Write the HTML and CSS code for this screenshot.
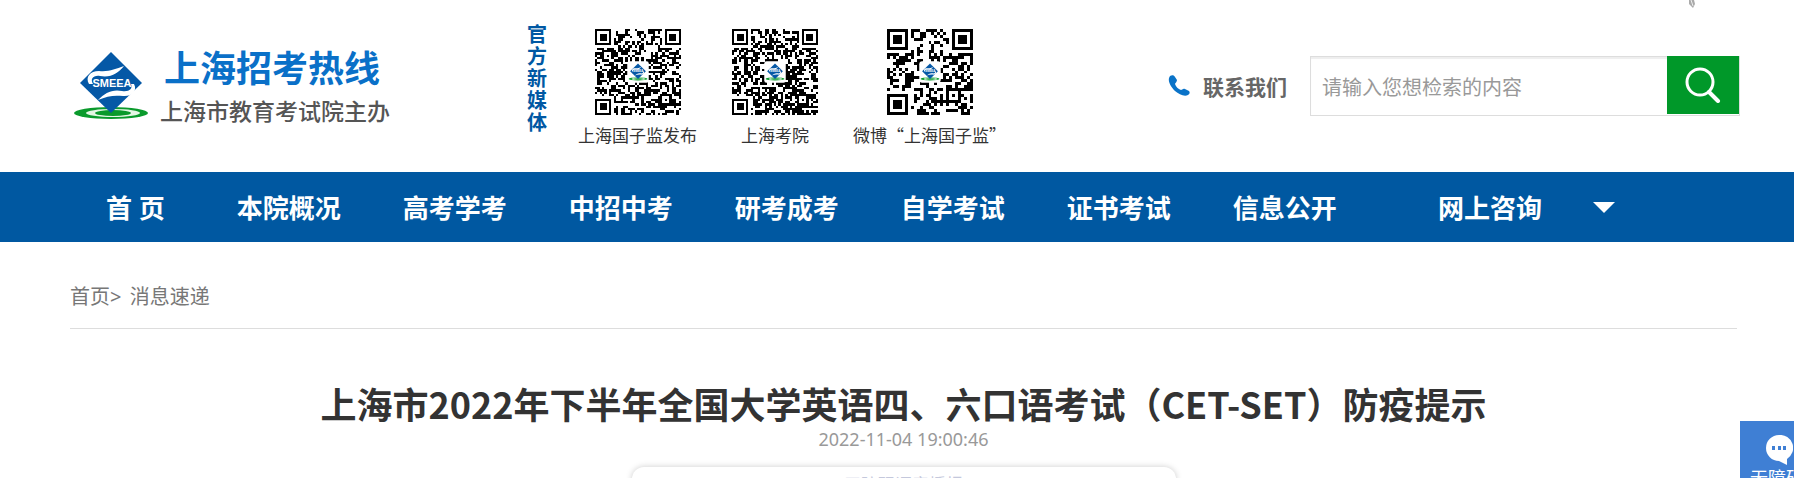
FILE: index.html
```
<!DOCTYPE html>
<html lang="zh-CN">
  <head>
    <meta charset="UTF-8" />
    <meta name="viewport" content="width=device-width, initial-scale=1.0" />
    <title>上海招考热线</title>
    <link rel="stylesheet" href="styles.css">
  </head>

  <body>
    <div class="header">
      <a class="logo" href="#">
        <svg class="logo-img" viewBox="0 0 76 68">
          <g id="emblem">
            <ellipse cx="38" cy="61" rx="37" ry="6" fill="#0a9a2c" />
            <ellipse cx="40" cy="61" rx="27" ry="4" fill="#e4f6e4" />
            <ellipse cx="40" cy="61" rx="18" ry="3" fill="#0a9a2c" />
            <path d="M38 0L69 31L38 61L7 31Z" fill="#0558a6" />
            <path d="M51 14C45 21 38 26 27 24C20 23 17 27 20 32L16 32C12 25 17 19 26 19C36 20 42 17 51 14Z" fill="#fff" />
            <path d="M25 48C32 41 39 37 49 39C56 40 60 37 58 32L61 32C65 39 58 45 50 44C41 43 34 44 25 48Z" fill="#fff" />
            <text x="39" y="35" text-anchor="middle" class="emblem-text">SMEEA</text>
          </g>
        </svg>
        <span class="logo-text">
          <strong>上海招考热线</strong>
          <em>上海市教育考试院主办</em>
        </span>
      </a>

      <div class="media">
        <h2>官方新媒体</h2>
        <ul>
          <li>
            <svg class="qr" data-size="37" data-seed="7"></svg>
            <p>上海国子监发布</p>
          </li>
          <li>
            <svg class="qr" data-size="37" data-seed="23"></svg>
            <p>上海考院</p>
          </li>
          <li>
            <svg class="qr" data-size="29" data-seed="41"></svg>
            <p>微博“上海国子监”</p>
          </li>
        </ul>
      </div>

      <a class="contact" href="#">
        <svg width="22" height="22" viewBox="0 0 22 22">
          <path d="M2 1C4 0 6 0 7 2L9 5C9 7 7 8 7 9C8 12 10 14 13 15C14 15 15 13 17 14L21 16C22 17 22 19 20 20C16 22 11 19 7 16C3 12 0 7 1 3Z" fill="#0a73c8" />
        </svg>
        <span>联系我们</span>
      </a>

      <form class="search">
        <input type="text" placeholder="请输入您想检索的内容" aria-label="检索" />
        <button type="button" aria-label="搜索">
          <svg width="36" height="36" viewBox="0 0 36 36" fill="none" stroke="#fff">
            <circle cx="15" cy="15" r="13" stroke-width="3" />
            <path d="M24 25L33 34" stroke-width="4" stroke-linecap="round" />
          </svg>
        </button>
      </form>
      <svg class="leaf" width="8" height="8" viewBox="0 0 8 8">
        <path d="M1 0V4L5 8L7 4L6 0Z" fill="#aaa" />
        <path d="M3 0L5 6" stroke="#eee" />
      </svg>
    </div>

    <div class="nav">
      <a class="home" href="#">首 页</a>
      <a href="#">本院概况</a>
      <a href="#">高考学考</a>
      <a href="#">中招中考</a>
      <a href="#">研考成考</a>
      <a href="#">自学考试</a>
      <a href="#">证书考试</a>
      <a href="#">信息公开</a>
      <a class="consult" href="#">网上咨询</a>
      <button class="more" type="button" aria-label="更多"></button>
    </div>

    <div class="content">
      <div class="crumbs"><a href="#">首页</a>&gt; <a href="#">消息速递</a></div>
      <h1>上海市2022年下半年全国大学英语四、六口语考试（CET-SET）防疫提示</h1>
      <p class="time">2022-11-04 19:00:46</p>
      <div class="card">无障碍语音播报</div>
    </div>

    <!-- 右下角悬浮按钮 -->
    <a class="float" href="#">
      <svg width="28" height="31" viewBox="0 0 28 31">
        <path d="M14 0A13 13 0 1 0 14 26L22 30V24A13 13 0 0 0 14 0Z" fill="#fff" />
        <path d="M7 11h3v4h-3zM13 11h3v4h-3zM18 11h3v4h-3z" fill="#3f7fd4" />
      </svg>
      <span>无障碍</span>
    </a>

    <script src="qr.js"></script>
  </body>
</html>
```
FILE: styles.css
```
* {
  margin: 0;
  padding: 0;
  box-sizing: border-box;
}

body {
  overflow: hidden;
  background: #fff;
  color: #333;
  font-family: "Noto Sans", "Noto Sans CJK SC", sans-serif;
}

a {
  color: inherit;
  text-decoration: none;
}

.emblem-text {
  font: bold 11px "Liberation Sans", sans-serif;
  fill: #fff;
}

.header {
  position: relative;
  display: flex;
  height: 172px;
  padding: 0 54px 0 73px;
}

.logo {
  display: flex;
  gap: 15px;
  padding-top: 48px;
}

.logo-img {
  width: 76px;
  height: 68px;
  margin-top: 4px;
}

.logo-text strong,
.logo-text em {
  display: block;
  font-style: normal;
  white-space: nowrap;
}

.logo-text strong {
  color: #0a70c8;
  font-size: 36px;
  line-height: 42px;
}

.logo-text em {
  margin-left: -4px;
  color: #555;
  font-size: 23px;
  font-weight: 500;
  line-height: 42px;
}

.media {
  display: flex;
  margin-left: 137px;
  padding-top: 24px;
}

.media h2 {
  width: 20px;
  color: #0058a3;
  font-size: 20px;
  line-height: 22px;
}

.media ul {
  display: flex;
  gap: 35px;
  margin-left: 31px;
  list-style: none;
}

.media li {
  min-width: 86px;
  padding-top: 5px;
  text-align: center;
}

.media p {
  margin-top: 8px;
  font-family: "Noto Sans CJK SC", sans-serif;
  font-size: 17px;
  line-height: 24px;
  white-space: nowrap;
}

.qr {
  display: block;
  width: 86px;
  height: 86px;
  margin: 0 auto;
}

.contact {
  display: flex;
  align-items: center;
  gap: 13px;
  height: 172px;
  margin-left: auto;
  color: #666;
  font-size: 21px;
  font-weight: bold;
}

.search {
  display: flex;
  width: 430px;
  height: 60px;
  margin: 56px 0 0 23px;
  border: 1px solid #ddd;
}

.search input {
  flex: 1;
  min-width: 0;
  padding-left: 11px;
  border: 0;
  outline: 0;
  font: 20px "Noto Sans CJK SC", sans-serif;
  box-shadow: inset 0 2px 1px #eee;
}

.search input::placeholder {
  color: #999;
}

.search button {
  width: 72px;
  margin: -1px 0 1px;
  border: 0;
  background: #009829;
  cursor: pointer;
}

.search svg {
  display: block;
  margin: 0 auto;
}

.leaf {
  position: absolute;
  top: 0;
  right: 98px;
}

.nav {
  display: flex;
  align-items: center;
  gap: 62px;
  height: 70px;
  padding-left: 106px;
  background: #0058a1;
  color: #fff;
  font-size: 26px;
  font-weight: bold;
  white-space: nowrap;
}

.nav .home {
  margin-right: 10px;
}

.nav .consult {
  margin-left: 39px;
}

.nav .more {
  margin-left: -11px;
  border: 11px solid transparent;
  border-top-color: #fff;
  border-bottom: 0;
  background: none;
  cursor: pointer;
}

.content {
  margin: 0 57px 0 70px;
}

.crumbs {
  padding: 40px 0 16px;
  border-bottom: 1px solid #ddd;
  color: #777;
  font-size: 20px;
  line-height: 30px;
}

.crumbs a + a {
  margin-left: 3px;
}

h1 {
  margin-top: 50px;
  font-family: "Noto Sans CJK SC", sans-serif;
  font-size: 36px;
  line-height: 48px;
  text-align: center;
}

.time {
  color: #999;
  font-size: 18px;
  line-height: 24px;
  text-align: center;
}

.card {
  width: 544px;
  height: 60px;
  margin: 16px auto 0;
  padding-top: 6px;
  border-radius: 12px;
  box-shadow: 0 0 6px #ccc;
  color: #c4c8dc;
  font-size: 17px;
  line-height: 24px;
  text-align: center;
}

.float {
  position: fixed;
  top: 421px;
  right: 0;
  width: 54px;
  height: 90px;
  padding: 14px 0 0 10px;
  background: #3f7fd4;
  color: #fff;
  font-size: 18px;
  line-height: 24px;
  white-space: nowrap;
  overflow: hidden;
}

.float svg {
  display: block;
  margin-left: 15px;
}
```
FILE: qr.js
```
var aQr = document.getElementsByClassName("qr");

// 定位角: 返回 true/false 表示黑白, 不在角内返回 null
function finder(x, y, n) {
  var corners = [[0, 0], [n - 7, 0], [0, n - 7]];
  for (var i = 0; i < corners.length; i++) {
    var d = Math.max(
      Math.abs(x - corners[i][0] - 3),
      Math.abs(y - corners[i][1] - 3)
    );
    if (d <= 4) {
      return d == 3 || d < 2;
    }
  }
  return null;
}

for (var i = 0; i < aQr.length; i++) {
  var n = Number(aQr[i].dataset.size);
  var seed = Number(aQr[i].dataset.seed);
  var path = "";
  for (var y = 0; y < n; y++) {
    for (var x = 0; x < n; x++) {
      seed = (seed * 1103515 + 12345) % 2147483;
      var on = finder(x, y, n);
      if (on === null) {
        var d = Math.max(Math.abs(x - n + 7), Math.abs(y - n + 7));
        on = d <= 2 ? d != 1 : seed % 1000 < 520;
      }
      if (on) {
        path += "M" + x + " " + y + "h1v1h-1z";
      }
    }
  }
  var mid = n / 2;
  var r = n / 8;
  var scale = (r * 1.8) / 76;
  aQr[i].setAttribute("viewBox", "0 0 " + n + " " + n);
  aQr[i].innerHTML =
    '<path d="' + path + '" shape-rendering="crispEdges"/>' +
    '<rect x="' + (mid - r) + '" y="' + (mid - r) + '" width="' + r * 2 +
    '" height="' + r * 2 + '" rx="1" fill="#fff"/>' +
    '<use href="#emblem" transform="translate(' + (mid - r * 0.9) + " " +
    (mid - r * 0.8) + ") scale(" + scale + ')"/>';
}
```
